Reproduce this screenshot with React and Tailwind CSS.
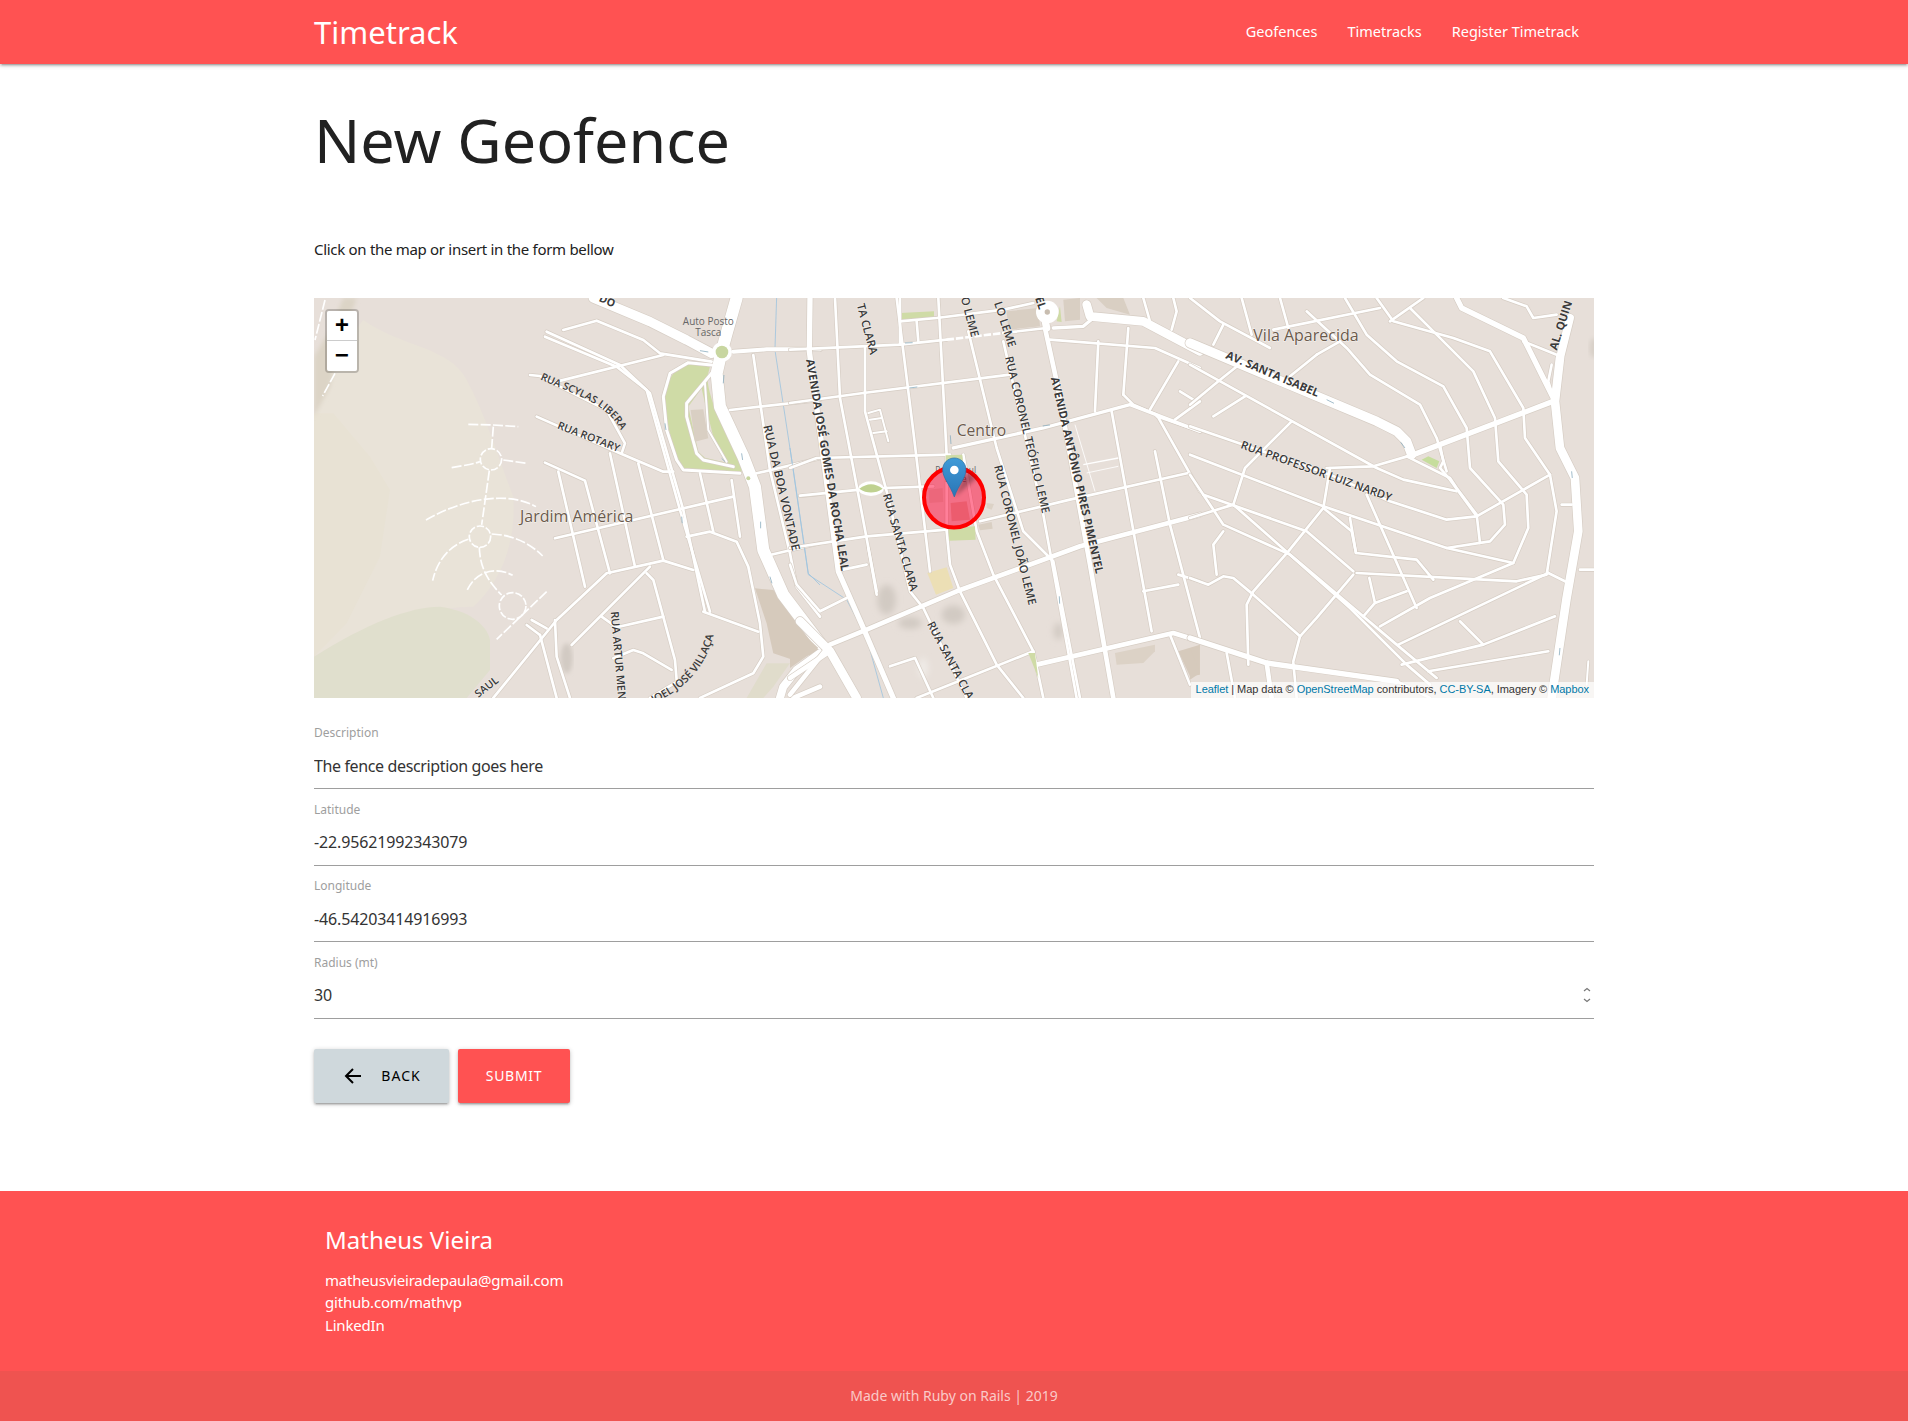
import React from 'react';

// trazos del mapa: [ancho, puntos], en pixeles del recorte ampliado x3
const leftRoads = [
  [28, '880,24 1050,95 1160,150 1235,190'],
  [36, '1310,24 1280,130 1265,185 1250,250 1260,350 1330,500 1365,590 1390,780 1450,915 1560,1060'],
  [9, '1235,250 1160,340 1160,380 1190,490 1210,510 1300,530'],
  [6, '1215,280 1225,420 1280,515'],
  [9, '1235,225 1165,218 1110,250 1090,320 1100,420 1130,510 1150,540 1320,550'],
  [12, '1300,185 1400,178 1560,178'],
  [8, '740,125 960,225 1050,310 1150,660 1215,965'],
  [8, '735,140 950,230 1040,300 1140,660 1230,965'],
  [8, '790,120 890,92 1030,150 1080,190 1235,215'],
  [8, '770,275 1090,195'],
  [8, '690,255 720,258 780,290 920,360 975,460 965,490'],
  [8, '710,380 960,490 1090,545 1120,545'],
  [8, '735,518 855,572 930,850'],
  [8, '775,545 855,890'],
  [8, '930,490 1005,830'],
  [8, '1015,520 1090,810'],
  [8, '765,745 1300,620'],
  [8, '580,1224 770,990 920,850 1090,812 1180,840'],
  [8, '1050,830 815,1065'],
  [8, '1040,850 1060,870 1125,1110 1130,1170'],
  [8, '1160,740 1230,725 1310,755 1345,830 1380,1000 1390,1100 1360,1150 1200,1224'],
  [8, '1210,965 1375,1025'],
  [8, '905,980 950,1012 1090,980'],
  [8, '940,1105 1000,1080 1030,1090 1115,1140'],
  [8, '765,990 770,1100 810,1224'],
  [8, '720,1035 770,1224'],
  [8, '680,1005 720,1035'],
  [8, '695,990 740,1015'],
  [8, '1140,1170 1050,1224'],
  [8, '1360,195 1410,540 1470,790 1490,890 1560,980'],
  [8, '1290,360 1560,330'],
  [8, '1370,550 1560,505'],
  [8, '1410,795 1560,760'],
  [8, '1500,618 1560,612'],
  [8, '1295,570 1320,740'],
  [8, '1200,550 1240,725'],
  [24, '1560,1090 1490,1140 1450,1190 1440,1224'],
  [14, '1480,1224 1560,1190'],
];

const midRoads = [
  [16, '60,0 58,160 145,820 220,990 310,1200'],
  [8, '0,155 330,140 470,125'],
  [8, '640,105 770,90'],
  [8, '0,315 220,285 660,230'],
  [8, '0,510 80,480 480,470'],
  [8, '30,593 210,575'],
  [8, '280,570 430,565'],
  [8, '0,750 230,715 470,695'],
  [10, '490,450 760,390 1020,320 1230,400'],
  [8, '320,0 370,400 420,820'],
  [8, '135,0 150,300 205,590 260,880'],
  [8, '225,150 225,340 290,580 360,880 400,930 530,1200'],
  [8, '445,0 470,470'],
  [8, '535,100 620,450 700,700 790,790 870,1200'],
  [8, '640,130 760,650 860,1200'],
  [14, '765,90 800,250 900,800 970,1200'],
  [14, '0,1190 120,1040 230,995 500,880 870,745 1230,650'],
  [8, '470,470 470,700 480,800 510,880 620,1100 700,1200'],
  [8, '520,470 560,700 610,830 730,1060 760,1200'],
  [26, '30,970 120,1060 200,1200'],
  [14, '120,1060 0,1140'],
  [8, '0,800 20,860 90,940 170,900'],
  [8, '160,815 230,800'],
  [8, '235,750 260,890'],
  [6, '235,345 270,335 295,430'],
  [6, '240,365 275,360'],
  [6, '250,405 290,400'],
  [8, '300,1105 375,1080 430,1200'],
  [14, '740,1100 1150,1005 1230,1030'],
  [8, '380,1200 730,1060'],
  [8, '1140,1010 1200,1160'],
  [8, '1060,880 1165,860'],
  [8, '1165,830 1230,850'],
  [8, '1000,290 1030,320 1100,350 1230,580'],
  [8, '965,340 1085,1000'],
  [8, '1095,460 1140,680 1230,1020'],
  [8, '570,670 840,605 1195,525'],
  [8, '780,125 1095,150 1230,210'],
  [8, '925,130 915,340'],
  [8, '1015,90 1000,290'],
  [8, '1165,190 1080,335'],
  [8, '1170,280 1210,305'],
  [8, '1155,365 1230,310'],
  [8, '1100,355 1230,400'],
  [26, '890,20 900,55 1060,70 1230,160'],
  [8, '330,70 440,60 640,35 730,15'],
  [8, '380,70 385,130'],
  [8, '330,0 330,140'],
  [8, '1060,0 1080,70'],
  [8, '1150,0 1160,40 1145,95'],
  [10, '790,90 880,85 910,60'],
  [22, '760,40 770,90'],
];

const rightRoads = [
  [28, '0,135 560,370 620,400 650,430 665,470'],
  [16, '670,470 1090,310'],
  [8, '410,510 550,505 670,470'],
  [26, '1110,180 1095,310 1110,450 1155,540 1165,700 1130,900 1085,1200'],
  [16, '800,0 815,30 1000,120 1060,240 1090,300'],
  [8, '1000,130 1100,170'],
  [24, '1140,60 1110,180'],
  [8, '1085,200 1075,250 1090,300'],
  [8, '940,0 1010,25 1030,60 1100,50'],
  [8, '0,0 90,70 240,150'],
  [8, '100,80 70,140'],
  [8, '155,0 185,110'],
  [8, '270,0 295,90'],
  [8, '250,95 570,30'],
  [8, '380,170 300,235'],
  [8, '450,130 380,170'],
  [8, '350,40 470,150 540,230 690,320 740,420 770,520'],
  [8, '465,0 530,110 620,190 760,265 830,390 840,510 940,620 945,680 900,730 770,750'],
  [8, '660,30 740,110 850,220 915,360 925,490 1010,590 1015,690 970,795 720,900 570,985'],
  [8, '560,0 610,70 790,120 900,160 1000,330 1005,420 1080,530 1100,640 1070,830 980,850 500,825'],
  [8, '600,70 700,0'],
  [8, '0,200 560,510 640,545 800,580'],
  [8, '0,385 420,530 600,610 770,665 860,655 1080,530'],
  [8, '0,470 400,625 770,750 970,795'],
  [8, '70,355 165,295'],
  [8, '0,320 85,250 160,190'],
  [8, '305,370 165,510 130,620 0,660'],
  [8, '0,530 100,680 300,770 480,930 650,1100 720,1160'],
  [8, '40,590 350,700 490,820'],
  [8, '130,620 300,770 620,1040 740,1140'],
  [8, '420,510 400,630 295,760 190,880 170,920 175,1100'],
  [8, '100,700 70,740 80,830'],
  [8, '0,840 55,860 100,835 130,840 190,890 330,1015'],
  [8, '490,830 380,960 330,1015 310,1090'],
  [8, '400,630 485,700 498,765 680,785 730,845'],
  [8, '480,660 498,765'],
  [8, '530,590 680,930'],
  [8, '538,840 555,915 520,955'],
  [8, '555,915 650,880'],
  [8, '625,1040 1075,825'],
  [8, '635,1100 880,1040 1095,955'],
  [8, '810,970 880,1040'],
  [8, '715,1120 1075,1060'],
  [16, '0,1020 230,1095 620,1150'],
  [8, '620,1150 720,1200'],
  [14, '230,1095 245,1200'],
  [8, '110,1065 135,1200'],
  [8, '310,1095 320,1200'],
  [8, '1115,620 1145,620'],
  [8, '1170,815 1212,815'],
  [8, '1075,825 1125,850'],
  [8, '650,475 780,540 800,570 860,650 870,735'],
  [8, '750,440 760,490 750,510 780,545 860,655'],
  [6, '1195,1090 1190,1160'],
];

const dashed = [
  'M505 403 L580 405 L655 410',
  'M580 410 L575 475',
  'M455 533 C500 525 520 522 540 515',
  'M610 510 L680 520',
  'M568 542 L545 705',
  'M378 690 C480 630 620 600 708 650',
  'M575 732 C640 735 690 760 728 798',
  'M505 748 C440 770 410 820 398 872',
  'M538 772 C540 840 570 880 605 915',
  'M502 900 C530 840 590 830 638 856',
  'M740 905 L590 1048',
  'M75 30 L45 150',
  'M105 250 L68 318',
];

// flechas de sentido unico
const arrows = [
  'M1200 182 L1225 186', 'M1272 255 L1270 280', 'M1095 400 L1098 420', 'M1145 680 L1147 700',
  'M1382 695 L1382 715', 'M1410 860 L1416 880', 'M1265 505 L1275 515', 'M1325 490 L1328 510',
];
const midArrows = ['M345 135 L368 134', 'M358 270 L382 267', 'M758 384 L780 381', 'M481 412 L483 438', 'M808 895 L809 917'];
const rightArrows = ['M410 305 L432 316', 'M632 433 L645 450', 'M1145 520 L1147 540', 'M1110 1050 L1108 1072'];

const Roads = ({ items, casing }) =>
  items.map(([w, pts], i) => (
    <polyline
      key={i}
      points={pts}
      fill="none"
      stroke={casing ? '#d6cdc4' : '#ffffff'}
      strokeWidth={casing ? w + 4 : w}
      strokeLinecap="round"
      strokeLinejoin="round"
    />
  ));

const Label = ({ x, y, r, size = 34, bold, children }) => (
  <text
    transform={`translate(${x} ${y}) rotate(${r})`}
    fontSize={size}
    fontWeight={bold ? 700 : 600}
    fontFamily="'Open Sans', sans-serif"
    fill="#3a3a3a"
    stroke="#ffffff"
    strokeOpacity="0.6"
    strokeWidth="3"
    paintOrder="stroke"
  >
    {children}
  </text>
);

const Place = ({ x, y, size = 48, children }) => (
  <text
    x={x}
    y={y}
    fontSize={size}
    fontFamily="'Open Sans', sans-serif"
    fill="#6b5a4c"
    stroke="#ffffff"
    strokeOpacity="0.7"
    strokeWidth="3"
    paintOrder="stroke"
  >
    {children}
  </text>
);

const MapDrawing = () => (
  <svg className="block w-full h-full" viewBox="0 0 1280 400">
    <defs>
      <filter id="blur6"><feGaussianBlur stdDeviation="10" /></filter>
      <filter id="blur3"><feGaussianBlur stdDeviation="6" /></filter>
      <path id="scylas" d="M720 268 C790 300 860 320 910 360 C945 385 965 420 975 450" />
      <path id="villaca" d="M1060 1240 C1150 1200 1235 1130 1250 985" />
      <linearGradient id="pin" x1="0" y1="0" x2="0" y2="1">
        <stop offset="0" stopColor="#3f9bd8" />
        <stop offset="1" stopColor="#2a75b5" />
      </linearGradient>
    </defs>
    <rect width="1280" height="400" fill="#e7dfd9" />

    {/* lado izquierdo */}
    <g transform="translate(-14 -8) scale(0.3333)">
      <path d="M190 90 C300 170 450 170 500 270 C560 380 600 520 640 620 C650 760 600 880 520 950 C400 950 200 1000 42 1100 L42 380 L100 200 Z" fill="#e9e3d8" />
      <path d="M42 370 L100 370 L210 500 L270 600 L240 800 L140 1000 L42 1100 Z" fill="#e8e2d4" />
      <path d="M42 1100 C200 1000 330 950 420 950 C500 960 560 1000 570 1050 L570 1140 L500 1224 L42 1224 Z" fill="#e0dfcd" />
      <path d="M42 380 L90 290 L110 200 L170 24 L130 24 L90 120 L42 200 Z" fill="#dcd4c6" filter="url(#blur3)" />
      <path d="M1365 895 L1420 900 L1560 1050 L1560 1085 L1480 1110 L1420 1090 L1400 1000 Z" fill="#d6cabc" />
      <path d="M1400 1120 L1470 1120 L1420 1190 L1390 1224 L1340 1224 Z" fill="#e0dccb" />
      <path d="M1165 218 C1110 240 1095 290 1095 330 C1100 420 1130 510 1150 535 L1325 545 L1325 530 C1290 450 1225 340 1222 260 L1230 230 Z" fill="#cfdba6" />
      <path d="M1205 295 L1165 350 L1195 485 L1215 503 L1280 518 L1240 440 L1215 340 Z" fill="#e7dfd9" />
      <ellipse cx="800" cy="1105" rx="18" ry="45" fill="#d2cac3" filter="url(#blur3)" />
      <path d="M1430 24 L1425 180 L1480 540 L1525 850 L1560 885" fill="none" stroke="#9fc4de" strokeWidth="2.5" />
      <Roads items={leftRoads} casing />
      <Roads items={leftRoads} />
      <path d="M1172 360 L1210 358 L1225 445 L1185 455 Z" fill="#d9cfc3" />
      <circle cx="1266" cy="186" r="30" fill="#ffffff" />
      <circle cx="1266" cy="186" r="19" fill="#c8d6a0" />
      <circle cx="1345" cy="565" r="6" fill="#c8d6a0" />
      <g fill="none" stroke="#ffffff" strokeWidth="5" strokeLinecap="butt" strokeDasharray="30 7">
        {dashed.map((d) => <path key={d} d={d} />)}
      </g>
      <g fill="none" stroke="#ffffff" strokeWidth="5" strokeDasharray="22 6">
        <circle cx="573" cy="508" r="32" />
        <circle cx="540" cy="740" r="32" />
        <circle cx="638" cy="948" r="40" />
      </g>
      <g fill="none" stroke="#8fb0c0" strokeWidth="2.5">
        {arrows.map((d) => <path key={d} d={d} />)}
      </g>
    </g>

    {/* centro */}
    <g transform="translate(476 0) scale(0.3333)">
      <path d="M650 40 L745 30 L750 85 L655 95 Z" fill="#d9cfc3" />
      <path d="M820 5 L870 0 L870 65 L825 70 Z" fill="#d9cfc3" />
      <path d="M920 0 L1000 0 L1020 50 L950 30 Z" fill="#d9cfc3" />
      <path d="M330 45 L432 40 L432 60 L330 65 Z" fill="#cfdba6" />
      <path d="M412 825 L470 808 L490 870 L438 890 Z" fill="#ecdfb5" />
      <path d="M975 1065 L1095 1040 L1095 1060 L1060 1095 L980 1100 Z" fill="#dcd2c6" />
      <path d="M1165 1060 L1230 1040 L1230 1130 L1200 1135 Z" fill="#d6cabc" />
      <path d="M0 970 L85 1050 L0 1110 Z" fill="#d6cabc" />
      <path d="M0 450 L55 830 L170 905 L230 1020 L280 1200" fill="none" stroke="#9fc4de" strokeWidth="2.5" />
      <g fill="#d2cac3" filter="url(#blur6)">
        <ellipse cx="290" cy="905" rx="28" ry="45" />
        <ellipse cx="490" cy="950" rx="35" ry="28" />
        <ellipse cx="360" cy="975" rx="35" ry="18" />
        <ellipse cx="805" cy="1000" rx="14" ry="25" />
        <ellipse cx="400" cy="1110" rx="14" ry="30" fill="#f0ece8" />
      </g>
      <Roads items={midRoads} casing />
      <Roads items={midRoads} />
      <path d="M470 125 L640 105" fill="none" stroke="#ffffff" strokeWidth="8" strokeDasharray="22 6" />
      <path d="M467 472 L517 470 L520 520 L467 520 Z" fill="#cfdba6" />
      <path d="M475 690 L555 685 L557 725 L478 728 Z" fill="#cfdba6" />
      <path d="M715 1065 L735 1065 L745 1140 Z" fill="#cfdba6" />
      <path d="M810 25 L800 70 L815 72 Z" fill="#cfdba6" />
      <path d="M565 680 L605 672 L608 692 L570 697 Z" fill="#d9cfc3" />
      <path d="M590 615 L612 618 L605 635 L590 630 Z" fill="#dcd2c6" />
      <path d="M415 575 L458 570 L460 612 L418 615 Z" fill="#d9cfc3" />
      <path d="M482 615 L530 610 L540 665 L485 670 Z" fill="#d9b8a8" />
      <ellipse cx="243" cy="572" rx="38" ry="22" fill="#ffffff" />
      <path d="M208 572 Q243 545 278 572 Q243 595 208 572 Z" fill="#bfd190" />
      <circle cx="772" cy="42" r="34" fill="#ffffff" />
      <circle cx="772" cy="42" r="8" fill="#c8bdb0" />
      <g fill="none" stroke="#ffffff">
        <path d="M855 380 L915 580" strokeWidth="2.5" />
        <path d="M880 500 L985 480" strokeWidth="4" />
        <path d="M890 525 L985 505" strokeWidth="2.5" />
      </g>
      <g fill="none" stroke="#8fb0c0" strokeWidth="2.5">
        {midArrows.map((d) => <path key={d} d={d} />)}
      </g>
    </g>

    {/* lado derecho */}
    <g transform="translate(876 0) scale(0.3333)">
      <path d="M0 1050 L30 1125 L0 1145 Z" fill="#d6cabc" />
      <Roads items={rightRoads} casing />
      <Roads items={rightRoads} />
      <path d="M695 485 L715 475 L748 490 L740 510 Z" fill="#c6dd9d" />
      <ellipse cx="1212" cy="150" rx="14" ry="30" fill="#d8d0c8" filter="url(#blur3)" />
      <g fill="none" stroke="#8fb0c0" strokeWidth="2.5">
        {rightArrows.map((d) => <path key={d} d={d} />)}
      </g>
    </g>

    {/* nombres, encima de todas las calles */}
    <g transform="translate(-14 -8) scale(0.3333)">
      <Label x={895} y={32} r={25} size={32} bold>DO</Label>
      <text fontSize="31" fontWeight="600" fontFamily="'Open Sans', sans-serif" fill="#3a3a3a">
        <textPath href="#scylas">RUA SCYLAS LIBERA</textPath>
      </text>
      <text fontSize="32" fontWeight="600" fontFamily="'Open Sans', sans-serif" fill="#3a3a3a">
        <textPath href="#villaca">JOEL JOSÉ VILLAÇA</textPath>
      </text>
      <Label x={770} y={415} r={21} size={32}>RUA ROTARY</Label>
      <Label x={1390} y={408} r={77} size={35}>RUA DA BOA VONTADE</Label>
      <Label x={932} y={965} r={85} size={33}>RUA ARTUR MEN</Label>
      <Label x={535} y={1224} r={-38} size={32}>SAUL</Label>
      <Place x={660} y={695} size={48}>Jardim América</Place>
      <text x="1225" y="104" textAnchor="middle" fontSize="30" fontFamily="'Open Sans', sans-serif" fill="#666666">Auto Posto</text>
      <text x="1225" y="137" textAnchor="middle" fontSize="30" fontFamily="'Open Sans', sans-serif" fill="#666666">Tasca</text>
    </g>
    <g transform="translate(476 0) scale(0.3333)">
      <Label x={48} y={185} r={80.5} bold>AVENIDA JOSÉ GOMES DA ROCHA LEAL</Label>
      <Label x={278} y={590} r={74}>RUA SANTA CLARA</Label>
      <Label x={410} y={978} r={62}>RUA SANTA CLA</Label>
      <Label x={612} y={505} r={76}>RUA CORONEL JOÃO LEME</Label>
      <Label x={645} y={178} r={76.6}>RUA CORONEL TEÓFILO LEME</Label>
      <Label x={782} y={240} r={77} bold>AVENIDA ANTÔNIO PIRES PIMENTEL</Label>
      <Label x={200} y={20} r={75}>TA CLARA</Label>
      <Label x={512} y={0} r={75}>O LEME</Label>
      <Label x={612} y={15} r={72}>LO LEME</Label>
      <Label x={735} y={0} r={72} bold>EL</Label>
      <Place x={500} y={415} size={47}>Centro</Place>
      <text x="497" y="525" textAnchor="middle" fontSize="25" fontFamily="'Open Sans', sans-serif" fill="#666666">Praça Paul</text>
      <text x="497" y="553" textAnchor="middle" fontSize="25" fontFamily="'Open Sans', sans-serif" fill="#666666">Leme</text>
    </g>
    <g transform="translate(876 0) scale(0.3333)">
      <Label x={105} y={180} r={23} bold>AV. SANTA ISABEL</Label>
      <Label x={150} y={450} r={19.6}>RUA PROFESSOR LUIZ NARDY</Label>
      <Label x={1100} y={158} r={-72} bold>AL. QUIN</Label>
      <Place x={190} y={130} size={48}>Vila Aparecida</Place>
    </g>

    {/* circulo y marcador */}
    <circle cx="640" cy="199.5" r="30" fill="#ff0033" fillOpacity="0.5" stroke="#ff0000" strokeWidth="4" />
    <g transform="translate(476 0) scale(0.3333)">
      <path d="M493 597 L560 540 L530 520 L520 540 Z" fill="#000000" opacity="0.3" filter="url(#blur3)" />
      <path d="M493 597 C480 560 458 540 458 515 C458 495 474 480 493 480 C512 480 528 495 528 515 C528 540 506 560 493 597 Z" fill="url(#pin)" stroke="#2b6ea6" strokeWidth="2" />
      <circle cx="493" cy="516" r="13" fill="#ffffff" />
    </g>
  </svg>
);

const Field = ({ label, value, number, narrow }) => (
  <div className="mb-[12.67px]">
    <label className="block h-4 mb-0.5 text-xs leading-4 text-[#9e9e9e]">{label}</label>
    <div className="flex items-center h-[46px] border-b border-[#9e9e9e]">
      <input
        className={narrow
          ? 'flex-1 min-w-0 h-full text-base text-[#333333] outline-none tracking-[-0.37px]'
          : 'flex-1 min-w-0 h-full text-base text-[#333333] outline-none tracking-[-0.15px]'}
        defaultValue={value}
      />
      {number && (
        <svg className="mr-[3px]" width="8" height="16" viewBox="0 0 8 16" fill="none" stroke="#777777" strokeWidth="1.2">
          <path d="M1 4 L4 1.5 L7 4" />
          <path d="M1 12 L4 14.5 L7 12" />
        </svg>
      )}
    </div>
  </div>
);

const App = () => {
  return (
    <div className="bg-white font-['Noto_Sans',sans-serif] text-[#212121] text-[15px]">
      <nav className="h-16 bg-[#ff5252] text-white shadow-[0_2px_2px_0_rgba(0,0,0,0.14),0_3px_1px_-2px_rgba(0,0,0,0.12),0_1px_5px_0_rgba(0,0,0,0.2)]">
        <div className="flex items-center justify-between w-[1280px] h-full mx-auto">
          <a className="text-[31px]">Timetrack</a>
          <ul className="flex text-[14.5px]">
            <li className="px-[15px]">Geofences</li>
            <li className="px-[15px]">Timetracks</li>
            <li className="px-[15px]">Register Timetrack</li>
          </ul>
        </div>
      </nav>

      <main className="w-[1280px] mx-auto">
        <h1 className="mt-[41px] text-[61px] leading-[70px]">New Geofence</h1>
        <p className="mt-[63px] text-[15px] leading-[22px] tracking-[-0.3px]">Click on the map or insert in the form bellow</p>

        <div className="relative h-[400px] mt-[38px] overflow-hidden">
          <MapDrawing />
          <div className="absolute top-[11px] left-[11px] w-[34px] border-2 border-black/20 rounded-[4px] bg-clip-padding">
            <div className="flex items-center justify-center h-[30px] pt-[3px] bg-white rounded-t-[2px] border-b border-[#cccccc] font-['Liberation_Mono',monospace] font-bold text-2xl text-black">+</div>
            <div className="flex items-center justify-center h-[30px] pt-[1px] bg-white rounded-b-[2px] font-['Liberation_Mono',monospace] font-bold text-2xl text-black">−</div>
          </div>
          <div className="absolute right-0 bottom-0 h-4 px-[5px] bg-white/70 font-['Liberation_Sans',sans-serif] text-[11px] leading-[15px] tracking-[-0.05px] text-[#333333]">
            <a className="text-[#0078a8]">Leaflet</a> | Map data © <a className="text-[#0078a8]">OpenStreetMap</a> contributors, <a className="text-[#0078a8]">CC-BY-SA</a>, Imagery © <a className="text-[#0078a8]">Mapbox</a>
          </div>
        </div>

        <form className="mt-[27px]">
          <Field label="Description" value="The fence description goes here" narrow />
          <Field label="Latitude" value="-22.95621992343079" />
          <Field label="Longitude" value="-46.54203414916993" />
          <Field label="Radius (mt)" value="30" number />

          <div className="flex gap-[9px] mt-[30px]">
            <button type="button" className="flex items-center justify-center w-[135px] h-[54px] rounded-[2px] bg-[#cfd8dc] text-black text-sm uppercase tracking-[1px] shadow-[0_2px_2px_0_rgba(0,0,0,0.14),0_3px_1px_-2px_rgba(0,0,0,0.12),0_1px_5px_0_rgba(0,0,0,0.2)]">
              <svg className="mr-[19px] ml-[2px]" width="18" height="16" viewBox="0 0 18 16" fill="none" stroke="#000000" strokeWidth="2">
                <path d="M17 8 H2" />
                <path d="M9 1 L2 8 L9 15" />
              </svg>
              Back
            </button>
            <button type="submit" className="w-[112px] h-[54px] rounded-[2px] bg-[#ff5252] text-white text-sm uppercase tracking-[0.7px] shadow-[0_2px_2px_0_rgba(0,0,0,0.14),0_3px_1px_-2px_rgba(0,0,0,0.12),0_1px_5px_0_rgba(0,0,0,0.2)]">
              Submit
            </button>
          </div>
        </form>
      </main>

      <footer className="mt-[88px] bg-[#ff5252] text-white">
        <div className="w-[1280px] h-[180px] mx-auto pl-[11px] pt-[33px]">
          <h5 className="text-2xl leading-8">Matheus Vieira</h5>
          <ul className="mt-[13px] text-[15px] leading-[22.5px] tracking-[-0.2px]">
            <li>matheusvieiradepaula@gmail.com</li>
            <li>github.com/mathvp</li>
            <li>LinkedIn</li>
          </ul>
        </div>
        <div className="flex items-center justify-center h-[50px] bg-[#ef5350] text-sm text-white/70">
          Made with Ruby on Rails | 2019
        </div>
      </footer>
    </div>
  );
};

export default App;
